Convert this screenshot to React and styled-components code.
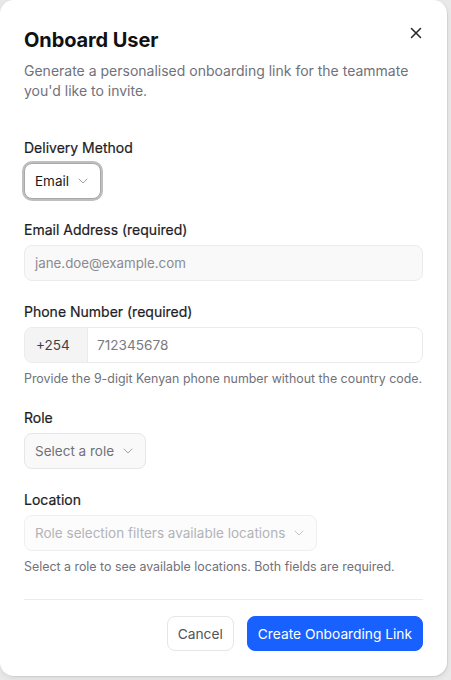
import React from "react";
import styled, { createGlobalStyle } from "styled-components";
import { X, ChevronDown } from "lucide-react";

const Global = createGlobalStyle`
  html, body { margin: 0; padding: 0; overflow: hidden; }
  body { background: #e8e8e8; font-family: Inter, "Noto Sans", sans-serif; -webkit-font-smoothing: antialiased; }
  * { box-sizing: border-box; }
`;

const Page = styled.div`
  width: 451px;
  height: 680px;
  background: #e9e9e9;
`;

const Dialog = styled.div`
  position: relative;
  width: 447px;
  height: 676px;
  background: #ffffff;
  border-radius: 14px;
  box-shadow: 1px 1px 0 rgba(0, 0, 0, 0.06), 0 2px 6px rgba(0, 0, 0, 0.08);
  padding: 26px 24px 24px 24px;
  display: flex;
  flex-direction: column;
`;

const CloseButton = styled.button`
  position: absolute;
  top: 24px;
  right: 22px;
  width: 18px;
  height: 18px;
  padding: 0;
  border: none;
  background: transparent;
  color: #27272a;
  display: flex;
  align-items: center;
  justify-content: center;
`;

const Title = styled.h2`
  margin: 0;
  font-size: 20px;
  line-height: 28px;
  font-weight: 700;
  color: #111111;
  letter-spacing: -0.005em;
`;

const Description = styled.p`
  margin: 7px 0 0 0;
  font-size: 14px;
  line-height: 20px;
  color: #71717a;
`;

const Form = styled.div`
  margin-top: 37px;
  display: flex;
  flex-direction: column;
  gap: 21px;
`;

const Field = styled.div`
  display: flex;
  flex-direction: column;
`;

const Label = styled.label`
  font-size: 14px;
  line-height: 20px;
  font-weight: 400;
  color: #202024;
  margin-bottom: 5px;
  -webkit-text-stroke: 0.2px #202024;
`;

const SelectButton = styled.button`
  align-self: flex-start;
  height: 36px;
  display: inline-flex;
  align-items: center;
  gap: 6px;
  padding: 0 9px 0 10px;
  border-radius: 8px;
  font-family: inherit;
  font-size: 13.5px;
  border: 1px solid ${(p) => (p.$focused ? "#a8a8a8" : p.$disabled ? "#efefef" : "#e6e6e6")};
  background: ${(p) => (p.$focused ? "#ffffff" : p.$disabled ? "#fcfcfc" : "#f9f9f9")};
  color: ${(p) => (p.$focused ? "#18181b" : p.$disabled ? "#b3b3b8" : "#71717a")};
  box-shadow: ${(p) => (p.$focused ? "0 0 0 2px rgba(170,170,170,0.75)" : "none")};
  svg { color: ${(p) => (p.$disabled ? "#c4c4c8" : "#a1a1aa")}; }
`;

const TextInput = styled.div`
  height: 36px;
  display: flex;
  align-items: center;
  padding: 0 10px;
  border: 1px solid #ebebeb;
  border-radius: 8px;
  background: #f9f9f9;
  font-size: 13.3px;
  color: #8a8a90;
`;

const InputGroup = styled.div`
  height: 36px;
  display: flex;
  border: 1px solid #ebebeb;
  border-radius: 8px;
  overflow: hidden;
  background: #ffffff;
`;

const Prefix = styled.span`
  width: 63px;
  display: flex;
  align-items: center;
  padding-left: 11px;
  background: #f4f4f5;
  border-right: 1px solid #ebebeb;
  font-size: 13.6px;
  color: #3f3f46;
`;

const GroupInput = styled.span`
  flex: 1;
  display: flex;
  align-items: center;
  padding-left: 9px;
  font-size: 13.6px;
  color: #7a7a80;
`;

const Help = styled.p`
  margin: 8px 0 0 0;
  font-size: 12.4px;
  line-height: 16px;
  color: #71717a;
`;

const Divider = styled.hr`
  margin: 24px 0 0 0;
  border: none;
  border-top: 1px solid #ececec;
`;

const Footer = styled.div`
  margin-top: 16px;
  display: flex;
  justify-content: flex-end;
  gap: 13px;
`;

const Button = styled.button`
  height: 35px;
  padding: 0 10px;
  border-radius: 8px;
  font-family: inherit;
  font-size: 13.75px;
  font-weight: 400;
  border: 1px solid ${(p) => (p.$primary ? "#1861ff" : "#e6e6e6")};
  background: ${(p) => (p.$primary ? "#1861ff" : "#ffffff")};
  color: ${(p) => (p.$primary ? "#ffffff" : "#52525b")};
`;

export default function App() {
  return (
    <Page>
      <Global />
      <Dialog>
        <CloseButton aria-label="Close">
          <X size={18} strokeWidth={2} />
        </CloseButton>
        <Title>Onboard User</Title>
        <Description>
          Generate a personalised onboarding link for the teammate you'd like to invite.
        </Description>
        <Form>
          <Field>
            <Label>Delivery Method</Label>
            <SelectButton $focused>
              Email
              <ChevronDown size={16} strokeWidth={1.5} />
            </SelectButton>
          </Field>
          <Field>
            <Label>Email Address (required)</Label>
            <TextInput>jane.doe@example.com</TextInput>
          </Field>
          <Field>
            <Label>Phone Number (required)</Label>
            <InputGroup>
              <Prefix>+254</Prefix>
              <GroupInput>712345678</GroupInput>
            </InputGroup>
            <Help>Provide the 9-digit Kenyan phone number without the country code.</Help>
          </Field>
          <Field>
            <Label>Role</Label>
            <SelectButton>
              Select a role
              <ChevronDown size={16} strokeWidth={1.5} />
            </SelectButton>
          </Field>
          <Field>
            <Label>Location</Label>
            <SelectButton $disabled>
              Role selection filters available locations
              <ChevronDown size={16} strokeWidth={1.5} />
            </SelectButton>
            <Help>Select a role to see available locations. Both fields are required.</Help>
          </Field>
        </Form>
        <Divider />
        <Footer>
          <Button>Cancel</Button>
          <Button $primary>Create Onboarding Link</Button>
        </Footer>
      </Dialog>
    </Page>
  );
}
